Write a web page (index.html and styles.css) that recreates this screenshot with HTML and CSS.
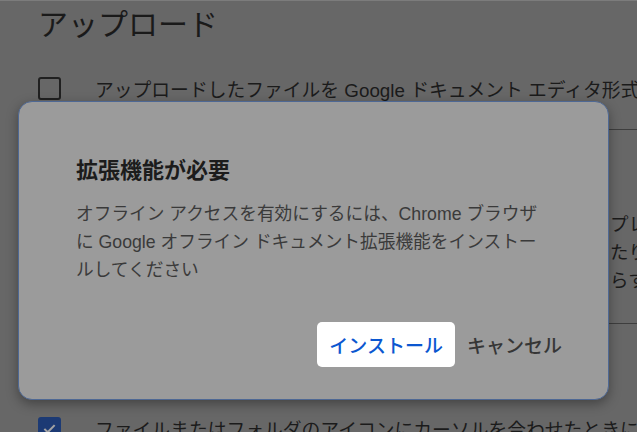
FILE: index.html
```html
<!DOCTYPE html>
<html lang="ja">
<head>
<meta charset="utf-8">
<title>アップロード</title>
<link rel="stylesheet" href="styles.css">
</head>
<body>
<div class="page">
  <h1 class="heading">アップロード</h1>
  <div class="row row-first">
    <span class="checkbox"></span>
    <span class="label">アップロードしたファイルを Google ドキュメント エディタ形式に変換</span>
  </div>
  <div class="section">
    <p class="line">プレッドシート</p>
    <p class="line">たりできます</p>
    <p class="line">らすには</p>
  </div>
  <div class="row row-last">
    <span class="checkbox checked">
      <svg viewBox="0 0 24 24" width="23" height="23"><path d="M5.5 12.5l4.2 4.2 8.8-9" fill="none" stroke="#a3a3a3" stroke-width="2.6"/></svg>
    </span>
    <span class="label">ファイルまたはフォルダのアイコンにカーソルを合わせたときにプレビューを表示</span>
  </div>
</div>

<div class="dialog" role="dialog">
  <h2 class="dialog-title">拡張機能が必要</h2>
  <p class="dialog-body">オフライン アクセスを有効にするには、Chrome ブラウザ に Google オフライン ドキュメント拡張機能をインストールしてください</p>
  <div class="actions">
    <button class="btn btn-primary">インストール</button>
    <button class="btn btn-text">キャンセル</button>
  </div>
</div>
</body>
</html>
```

FILE: styles.css
```css
html, body {
  margin: 0;
  padding: 0;
}
body {
  width: 637px;
  height: 432px;
  overflow: hidden;
  background: #676767;
  font-family: "Liberation Sans", "Noto Sans CJK JP", sans-serif;
  color: #1b1b1b;
  position: relative;
}
.page {
  border-top: 1px solid #7c7c7c;
  padding-left: 38px;
}
.heading {
  margin: 3px 0 0;
  font-size: 30px;
  line-height: 41px;
  font-weight: 400;
  color: #1a1a1a;
}
.row {
  display: flex;
  align-items: center;
  gap: 34px;
  height: 40px;
  white-space: nowrap;
}
.row-first {
  margin-top: 23px;
}
.row-last {
  margin-top: 84px;
}
.label {
  font-size: 18.8px;
  color: #1b1b1b;
}
.checkbox {
  width: 23px;
  height: 23px;
  box-sizing: border-box;
  border: 2px solid #202020;
  border-radius: 3px;
  flex: none;
  display: flex;
  align-items: center;
  justify-content: center;
}
.checkbox.checked {
  background: #1c3a74;
  border-color: #1c3a74;
}
.section {
  margin-top: 21px;
  margin-left: 57px;
  border-top: 1px solid #3e3e3e;
  border-bottom: 1px solid #3e3e3e;
  padding: 81px 0 28px 515px;
}
.line {
  margin: 0;
  font-size: 18.5px;
  line-height: 28px;
  white-space: nowrap;
  color: #1b1b1b;
}
.dialog {
  position: absolute;
  left: 18px;
  top: 101px;
  width: 591px;
  height: 299px;
  box-sizing: border-box;
  border: 1.5px solid #4e6894;
  border-radius: 14px;
  background: #9b9b9b;
  box-shadow: 0 4px 12px rgba(0, 0, 0, 0.35);
  padding: 54px 34px 32px 57px;
  display: flex;
  flex-direction: column;
}
.dialog-title {
  margin: 0;
  font-size: 22px;
  line-height: 29px;
  font-weight: 700;
  color: #1c1c1c;
}
.dialog-body {
  margin: 15px 0 0;
  max-width: 470px;
  font-size: 17.7px;
  line-height: 28px;
  color: #3a3a3a;
}
.actions {
  margin-top: auto;
  display: flex;
  justify-content: flex-end;
  align-items: center;
  gap: 0;
}
.btn {
  font-family: inherit;
  font-size: 19px;
  font-weight: 500;
  height: 45px;
  padding: 0 12px;
  border: none;
  border-radius: 5px;
  background: transparent;
  cursor: pointer;
}
.btn-primary {
  background: #ffffff;
  color: #0b57d0;
}
.btn-text {
  color: #363636;
}
```
